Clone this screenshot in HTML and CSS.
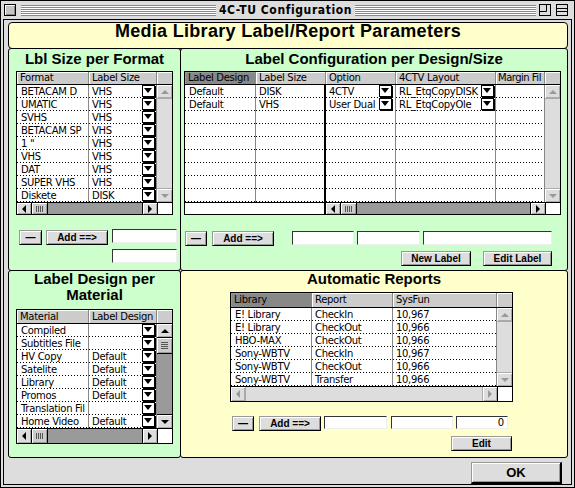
FILE: index.html
```html
<!DOCTYPE html>
<html>
<head>
<meta charset="utf-8">
<title>4C-TU Configuration</title>
<link rel="stylesheet" href="styles.css">
</head>
<body>
<div class="window">
  <div class="titlebar">
    <div class="closebox"></div>
    <div class="stripes left"></div>
    <div class="wtitle">4C-TU Configuration</div>
    <div class="stripes right"></div>
    <svg class="wbox" width="12" height="12" viewBox="0 0 12 12"><rect x="0.5" y="0.5" width="11" height="11" fill="#ddd" stroke="#000"/><path d="M0.5 7.5H7.5V0.5" fill="none" stroke="#000"/></svg>
    <svg class="wbox gap" width="12" height="12" viewBox="0 0 12 12"><rect x="0.5" y="0.5" width="11" height="11" fill="#ddd" stroke="#000"/><path d="M0.5 4.5H11.5M0.5 7.5H11.5" fill="none" stroke="#000"/></svg>
  </div>
  <div class="frame">
    <div class="header">Media Library Label/Report Parameters</div>
    <div class="grid">
      <section class="panel green p-tl">
        <div class="ph">Lbl Size per Format</div>
        <div class="tbl t-fmt">
          <div class="thead"><div class="th">Format</div><div class="th">Label Size</div><div class="th corner"></div></div>
          <div class="tbody">
            <div class="rows">
              <div class="td c1">BETACAM D</div><div class="td">VHS<span class="pop"></span></div>
              <div class="td c1">UMATIC</div><div class="td">VHS<span class="pop"></span></div>
              <div class="td c1">SVHS</div><div class="td">VHS<span class="pop"></span></div>
              <div class="td c1">BETACAM SP</div><div class="td">VHS<span class="pop"></span></div>
              <div class="td c1">1 "</div><div class="td">VHS<span class="pop"></span></div>
              <div class="td c1">VHS</div><div class="td">VHS<span class="pop"></span></div>
              <div class="td c1">DAT</div><div class="td">VHS<span class="pop"></span></div>
              <div class="td c1">SUPER VHS</div><div class="td">VHS<span class="pop"></span></div>
              <div class="td c1">Diskete</div><div class="td">DISK<span class="pop"></span></div>
            </div>
            <div class="vsb off"><div class="arr u"></div><div class="track"></div><div class="arr d"></div></div>
          </div>
          <div class="hsb on"><div class="arr l"></div><div class="thumb"></div><div class="track"></div><div class="arr r"></div><div class="cbox"></div></div>
        </div>
        <div class="ctl ctl1">
          <div class="btn minus">—</div>
          <div class="btn add">Add ==&gt;</div>
          <div class="fld f1"></div>
        </div>
        <div class="ctl ctl2">
          <div class="fld f1"></div>
        </div>
      </section>

      <section class="panel green p-tr">
        <div class="ph">Label Configuration per Design/Size</div>
        <div class="tbl t-cfg">
          <div class="thead"><div class="th sel">Label Design</div><div class="th">Label Size</div><div class="th">Option</div><div class="th">4CTV Layout</div><div class="th tight">Margin Fil</div><div class="th corner"></div></div>
          <div class="tbody">
            <div class="rows">
              <div class="td c1">Default</div><div class="td lock">DISK</div><div class="td">4CTV<span class="pop in3"></span></div><div class="td">RL_EtqCopyDISK<span class="pop"></span></div><div class="td"></div>
              <div class="td c1">Default</div><div class="td lock">VHS</div><div class="td">User Dual<span class="pop in3"></span></div><div class="td">RL_EtqCopyOle<span class="pop"></span></div><div class="td"></div>
              <div class="td"></div><div class="td lock"></div><div class="td"></div><div class="td"></div><div class="td"></div>
              <div class="td"></div><div class="td lock"></div><div class="td"></div><div class="td"></div><div class="td"></div>
              <div class="td"></div><div class="td lock"></div><div class="td"></div><div class="td"></div><div class="td"></div>
              <div class="td"></div><div class="td lock"></div><div class="td"></div><div class="td"></div><div class="td"></div>
              <div class="td"></div><div class="td lock"></div><div class="td"></div><div class="td"></div><div class="td"></div>
              <div class="td"></div><div class="td lock"></div><div class="td"></div><div class="td"></div><div class="td"></div>
              <div class="td"></div><div class="td lock"></div><div class="td"></div><div class="td"></div><div class="td"></div>
            </div>
            <div class="vsb off"><div class="arr u"></div><div class="track"></div><div class="arr d"></div></div>
          </div>
          <div class="hsb on"><div class="lockpad"></div><div class="arr l"></div><div class="thumb"></div><div class="track"></div><div class="arr r"></div><div class="cbox"></div></div>
        </div>
        <div class="ctl ctl1">
          <div class="btn minus">—</div>
          <div class="btn add">Add ==&gt;</div>
          <div class="fld f1"></div>
          <div class="fld f2"></div>
          <div class="fld f3"></div>
        </div>
        <div class="ctl ctl2">
          <div class="btn newlabel">New Label</div>
          <div class="btn editlabel">Edit Label</div>
        </div>
      </section>

      <section class="panel green p-bl">
        <div class="ph">Label Design per<br>Material</div>
        <div class="tbl t-mat">
          <div class="thead"><div class="th">Material</div><div class="th">Label Design</div><div class="th corner"></div></div>
          <div class="tbody">
            <div class="rows">
              <div class="td c1">Compiled</div><div class="td"><span class="pop"></span></div>
              <div class="td c1">Subtitles File</div><div class="td"><span class="pop"></span></div>
              <div class="td c1">HV Copy</div><div class="td">Default<span class="pop"></span></div>
              <div class="td c1">Satelite</div><div class="td">Default<span class="pop"></span></div>
              <div class="td c1">Library</div><div class="td">Default<span class="pop"></span></div>
              <div class="td c1">Promos</div><div class="td">Default<span class="pop"></span></div>
              <div class="td c1">Translation Fil</div><div class="td"><span class="pop"></span></div>
              <div class="td c1">Home Video</div><div class="td">Default<span class="pop"></span></div>
            </div>
            <div class="vsb on"><div class="arr u"></div><div class="thumb"></div><div class="track"></div><div class="arr d"></div></div>
          </div>
          <div class="hsb on"><div class="arr l"></div><div class="thumb"></div><div class="track"></div><div class="arr r"></div><div class="cbox"></div></div>
        </div>
      </section>

      <section class="panel yellow p-br">
        <div class="ph">Automatic Reports</div>
        <div class="tbl t-rep">
          <div class="thead"><div class="th sel">Library</div><div class="th">Report</div><div class="th">SysFun</div><div class="th corner"></div></div>
          <div class="tbody">
            <div class="rows">
              <div class="td c1">E! Library</div><div class="td">CheckIn</div><div class="td">10,967</div>
              <div class="td c1">E! Library</div><div class="td">CheckOut</div><div class="td">10,966</div>
              <div class="td c1">HBO-MAX</div><div class="td">CheckOut</div><div class="td">10,966</div>
              <div class="td c1">Sony-WBTV</div><div class="td">CheckIn</div><div class="td">10,967</div>
              <div class="td c1">Sony-WBTV</div><div class="td">CheckOut</div><div class="td">10,966</div>
              <div class="td c1">Sony-WBTV</div><div class="td">Transfer</div><div class="td">10,966</div>
            </div>
            <div class="vsb off"><div class="arr u"></div><div class="track"></div><div class="arr d"></div></div>
          </div>
          <div class="hsb off"><div class="arr l"></div><div class="track"></div><div class="arr r"></div><div class="cbox"></div></div>
        </div>
        <div class="ctl ctl1">
          <div class="btn minus">—</div>
          <div class="btn add">Add ==&gt;</div>
          <div class="fld f1"></div>
          <div class="fld f2"></div>
          <div class="fld f3">0</div>
        </div>
        <div class="ctl ctl2">
          <div class="btn edit">Edit</div>
        </div>
      </section>
    </div>
    <div class="okbar"><div class="btn ok">OK</div></div>
  </div>
</div>
</body>
</html>
```

FILE: styles.css
```css
* { box-sizing: border-box; }
html, body { margin: 0; padding: 0; background: #fff; }
body { font-family: "DejaVu Sans", "Liberation Sans", sans-serif; font-size: 10px; color: #000; }

.window { width: 575px; height: 488px; border: 1px solid #000; background: #ddd; display: flex; flex-direction: column; }

/* title bar */
.titlebar { flex: none; height: 18px; display: flex; align-items: center; padding: 0 6px 0 3px; }
.closebox { flex: none; width: 12px; height: 12px; border: 1px solid #000; background: #c4c4c4; box-shadow: inset 1px 1px #fff, inset -1px -1px #888; margin-right: 5px; }
.stripes { height: 11px; background: repeating-linear-gradient(to bottom, #888 0 1px, #fff 1px 2px); }
.stripes.left { flex: none; width: 195px; }
.stripes.right { flex: 1; }
.wtitle { flex: none; width: 139px; text-align: center; font: bold 12px/16px "DejaVu Sans Condensed", "DejaVu Sans", sans-serif; letter-spacing: 0.6px; white-space: nowrap; }
.wbox { display: block; flex: none; margin-left: 3px; }
.wbox.gap { margin-left: 5px; }

/* frame */
.frame { flex: 1; margin: 0 2px 2px; border: 1px solid #000; padding: 2px 3px 0 4px; display: flex; flex-direction: column; }
.header { flex: none; height: 27px; background: #ffc; border: 1px solid #000; border-radius: 4px; text-align: center; font: bold 18px/16px "Liberation Sans", Arial, sans-serif; letter-spacing: 0.3px; white-space: nowrap; }

.grid { flex: none; display: grid; grid-template-columns: 173px 387px; grid-template-rows: 223px 187px; margin-top: -1px; }
.panel { border: 1px solid #000; border-radius: 3px; display: flex; flex-direction: column; align-items: flex-start; }
.green { background: #cfc; }
.yellow { background: #ffc; }
.p-tr, .p-br { margin-left: -1px; }
.p-bl, .p-br { margin-top: -1px; }

.ph { align-self: stretch; text-align: center; font: bold 15px "Liberation Sans", Arial, sans-serif; white-space: nowrap; }
.p-tl .ph, .p-tr .ph { height: 22px; line-height: 19px; }
.p-bl .ph { height: 32px; line-height: 16px; margin-bottom: 6px; }
.p-br .ph { height: 16px; line-height: 16px; margin-bottom: 5px; }

/* tables */
.tbl { flex: none; border: 1px solid #000; background: #fff; }
.t-fmt { width: 157px; margin-left: 7px; --cols: 72px 68px; }
.t-cfg { width: 377px; margin-left: 3px; --cols: 71px 70px 70px 100px 49px; }
.t-mat { width: 157px; margin-left: 7px; --cols: 72px 68px; }
.t-rep { width: 283px; margin-left: 49px; --cols: 81px 81px 104px; }

.thead { display: grid; grid-template-columns: var(--cols) 1fr; height: 13px; border-bottom: 1px solid #000; }
.t-mat .thead { height: 14px; }
.t-rep .thead { height: 15px; }
.th { background: #ccc; border-right: 1px solid #888; box-shadow: inset 1px 1px #fff; padding-left: 3px; line-height: 12px; white-space: nowrap; overflow: hidden; letter-spacing: -0.3px; }
.th.tight { padding-left: 2px; letter-spacing: -0.5px; }
.t-mat .th { line-height: 13px; }
.t-rep .th { line-height: 14px; }
.th.sel { background: #888; box-shadow: inset 1px 1px #999; }
.th.corner { border-right: 0; }

.tbody { display: flex; }
.rows { display: grid; grid-template-columns: var(--cols); grid-auto-rows: 13px; }
.td { position: relative; border-right: 1px solid #888; padding-left: 3px; line-height: 13px; white-space: nowrap; overflow: hidden; letter-spacing: -0.3px;
  background: linear-gradient(to right, #000 1px, transparent 1px) 0 100% / 3px 1px repeat-x; }
.td.c1 { padding-left: 4px; }
.td.lock { border-right: 2px solid #000; }

.pop { position: absolute; right: 1px; top: 0; width: 13px; height: 12px; border: 1px solid #000; background: #fff; box-shadow: 1px 1px 0 #000; }
.pop.in3 { right: 3px; }
.pop::after { content: ""; position: absolute; left: 1px; top: 2px; border-left: 4px solid transparent; border-right: 4px solid transparent; border-top: 5px solid #000; }

/* scrollbars */
.vsb { flex: none; width: 15px; display: flex; flex-direction: column; background: #ddd; }
.hsb { display: flex; height: 12px; border-top: 1px solid #000; }
.t-mat .hsb, .t-rep .hsb { height: 15px; }
.arr { flex: none; display: flex; align-items: center; justify-content: center; background: #ddd; color: #000; box-shadow: inset 1px 1px #fff, inset -1px -1px #aaa; }
.vsb .arr { height: 14px; }
.hsb .arr { width: 15px; }
.arr::before { content: ""; display: block; width: 0; height: 0; }
.arr.u::before { border-left: 4px solid transparent; border-right: 4px solid transparent; border-bottom: 4px solid currentColor; }
.arr.d::before { border-left: 4px solid transparent; border-right: 4px solid transparent; border-top: 4px solid currentColor; }
.arr.l::before { border-top: 4px solid transparent; border-bottom: 4px solid transparent; border-right: 4px solid currentColor; }
.arr.r::before { border-top: 4px solid transparent; border-bottom: 4px solid transparent; border-left: 4px solid currentColor; }
.off .arr { color: #999; }
.on .arr.u { border-bottom: 1px solid #000; }
.on .arr.d { border-top: 1px solid #000; }
.on .arr.l { border-right: 1px solid #000; }
.on .arr.r { border-left: 1px solid #000; }
.off .arr.u { border-bottom: 1px solid #aaa; }
.off .arr.d { border-top: 1px solid #aaa; }
.off .arr.l { border-right: 1px solid #aaa; }
.off .arr.r { border-left: 1px solid #aaa; }
.track { flex: 1; background: #9a9a9a; }
.off .track { background: #ddd; }
.thumb { flex: none; display: flex; align-items: center; justify-content: center; background: #ccc; box-shadow: inset 1px 1px #fff, inset -1px -1px #999; }
.hsb .thumb { width: 16px; border-right: 1px solid #000; }
.hsb .thumb::before { content: ""; width: 7px; height: 6px; background: repeating-linear-gradient(to right, #555 0 1px, transparent 1px 2px); }
.vsb .thumb { height: 16px; border-bottom: 1px solid #000; }
.vsb .thumb::before { content: ""; width: 7px; height: 7px; background: repeating-linear-gradient(to bottom, #555 0 1px, transparent 1px 2px); }
.cbox { flex: none; width: 15px; background: #fff; border-left: 1px solid #000; }
.lockpad { flex: none; width: 141px; background: #fff; border-right: 2px solid #000; }

/* controls */
.ctl { display: flex; align-items: flex-start; }
.btn { flex: none; height: 15px; background: #ddd; border: 1px solid; border-color: #999 #000 #000 #999; box-shadow: inset 1px 1px #fff, inset -1px -1px #999; font: bold 10px/13px "Liberation Sans Narrow", "Liberation Sans", Arial, sans-serif; text-align: center; color: #000; white-space: nowrap; }
.fld { flex: none; height: 14px; background: #fff; border: 1px solid; border-color: #333 #eee #eee #333; font-size: 10px; line-height: 12px; text-align: right; padding-right: 3px; }

.p-tl .ctl1 { margin: 14px 0 0 10px; gap: 4px; }
.p-tl .ctl1 .btn { margin-top: 1px; }
.p-tl .minus { width: 23px; }
.p-tl .add { width: 62px; }
.p-tl .f1 { width: 65px; }
.p-tl .ctl2 { margin: 4px 0 0 103px; }

.p-tr .ctl1 { margin: 16px 0 0 4px; }
.p-tr .minus { width: 22px; }
.p-tr .add { width: 62px; margin-left: 5px; }
.p-tr .f1 { width: 62px; margin-left: 18px; }
.p-tr .f2 { width: 63px; margin-left: 3px; }
.p-tr .f3 { width: 129px; margin-left: 3px; }
.p-tr .ctl2 { margin: 5px 0 0 220px; gap: 12px; }
.newlabel { width: 70px; }
.editlabel { width: 69px; }

.p-br .ctl1 { margin: 14px 0 0 51px; }
.p-br .minus { width: 22px; }
.p-br .add { width: 62px; margin-left: 5px; }
.p-br .fld { height: 13px; line-height: 11px; }
.p-br .f1 { width: 63px; margin-left: 3px; }
.p-br .f2 { width: 62px; margin-left: 4px; }
.p-br .f3 { width: 52px; margin-left: 3px; }
.p-br .ctl2 { margin: 5px 0 0 270px; }
.edit { width: 61px; }

.okbar { flex: none; display: flex; justify-content: flex-end; padding: 4px 6px 0 0; }
.btn.ok { width: 91px; height: 22px; font-size: 13px; line-height: 20px; border-width: 1px 2px 2px 1px; }
```
